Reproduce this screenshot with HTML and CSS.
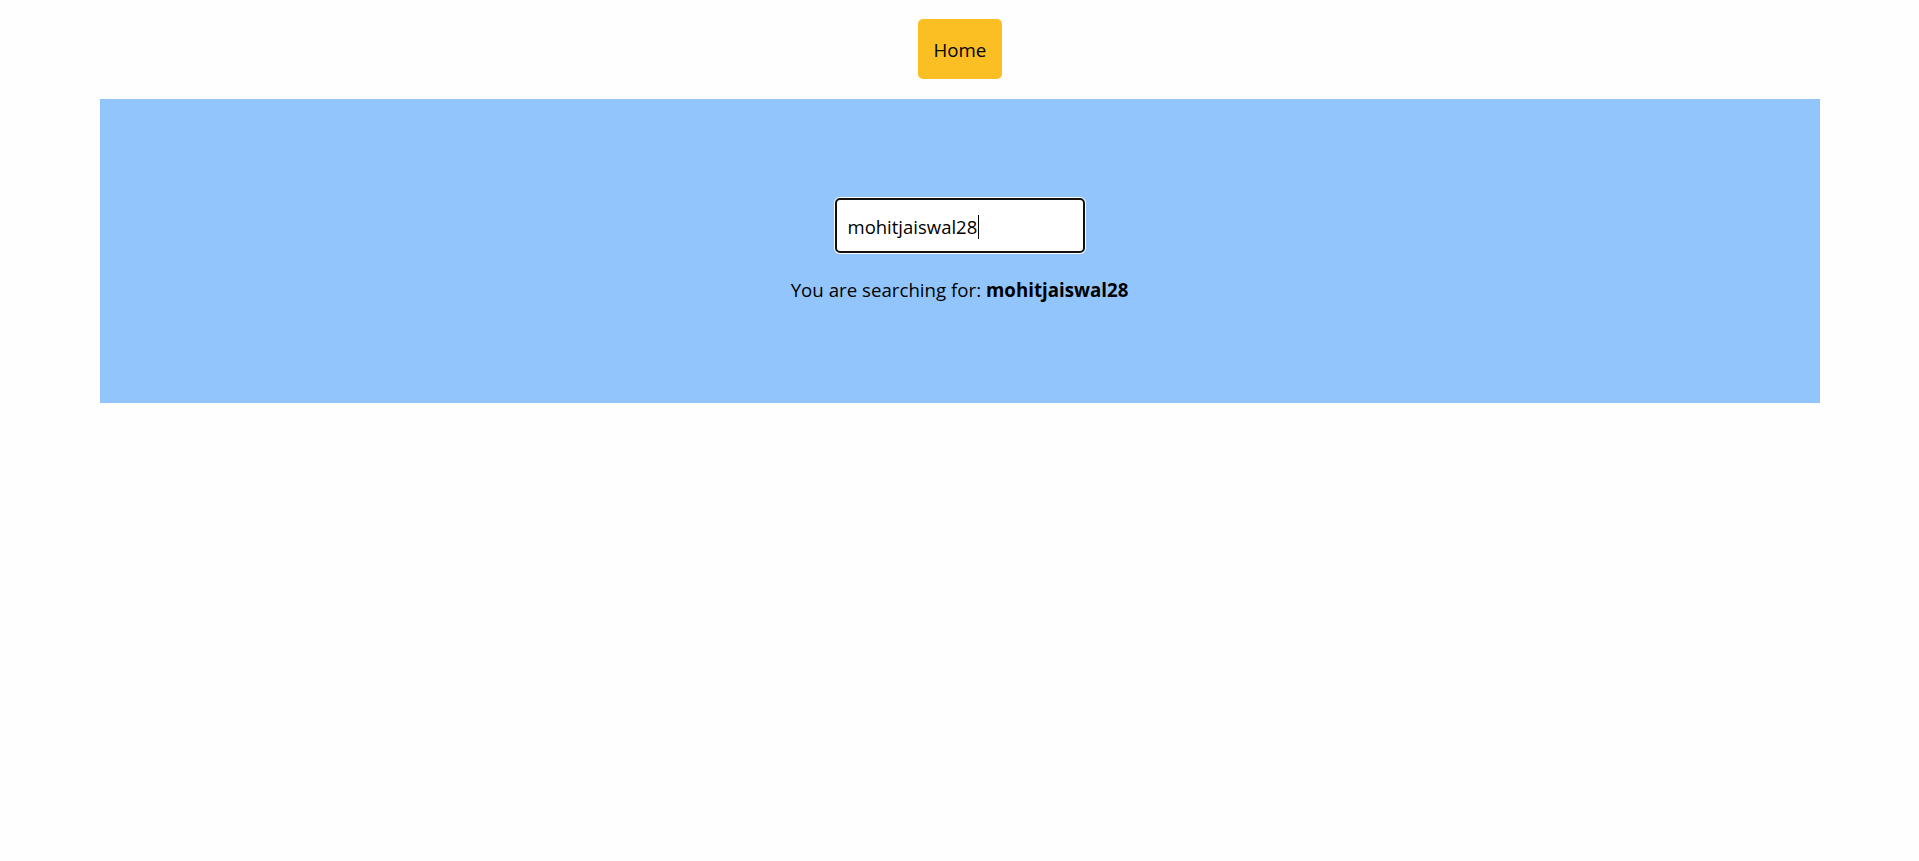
FILE: index.html
```html
<!DOCTYPE html>
<html>
<head>
<meta charset="utf-8">
<link rel="stylesheet" href="styles.css">
</head>
<body>
<nav class="nav">
  <a class="home-btn">Home</a>
</nav>
<section class="panel">
  <div class="search-box">mohitjaiswal28<span class="caret"></span></div>
  <p class="result">You are searching for: <b>mohitjaiswal28</b></p>
</section>
</body>
</html>
```
FILE: styles.css
```css
html, body {
  margin: 0;
  padding: 0;
  background: #fefefe;
  font-family: "Open Sans", "Noto Sans", sans-serif;
  font-size: 18.7px;
  color: #000;
}
.nav {
  display: flex;
  justify-content: center;
  padding-top: 19px;
  padding-bottom: 20px;
}
.home-btn {
  display: block;
  background: #fbbf24;
  border-radius: 5px;
  padding: 16px 16px;
  line-height: 30px;
  height: 28px;
  width: 52px;
  text-align: center;
}
.panel {
  width: 1720px;
  height: 304px;
  margin: 0 auto;
  background: #93c5fd;
  display: flex;
  flex-direction: column;
  align-items: center;
  box-sizing: border-box;
  padding-top: 99px;
}
.search-box {
  box-sizing: border-box;
  width: 250px;
  height: 55px;
  background: #fff;
  border: 2px solid #111;
  border-radius: 5px;
  box-shadow: 0 0 0 1px #fff;
  padding: 2px 11px 0;
  display: flex;
  align-items: center;
  font-size: 18.5px;
}
.caret {
  display: inline-block;
  width: 1px;
  height: 24px;
  background: #000;
  margin-left: 1px;
}
.result {
  margin: 23px 0 0;
  line-height: 28px;
}
```
